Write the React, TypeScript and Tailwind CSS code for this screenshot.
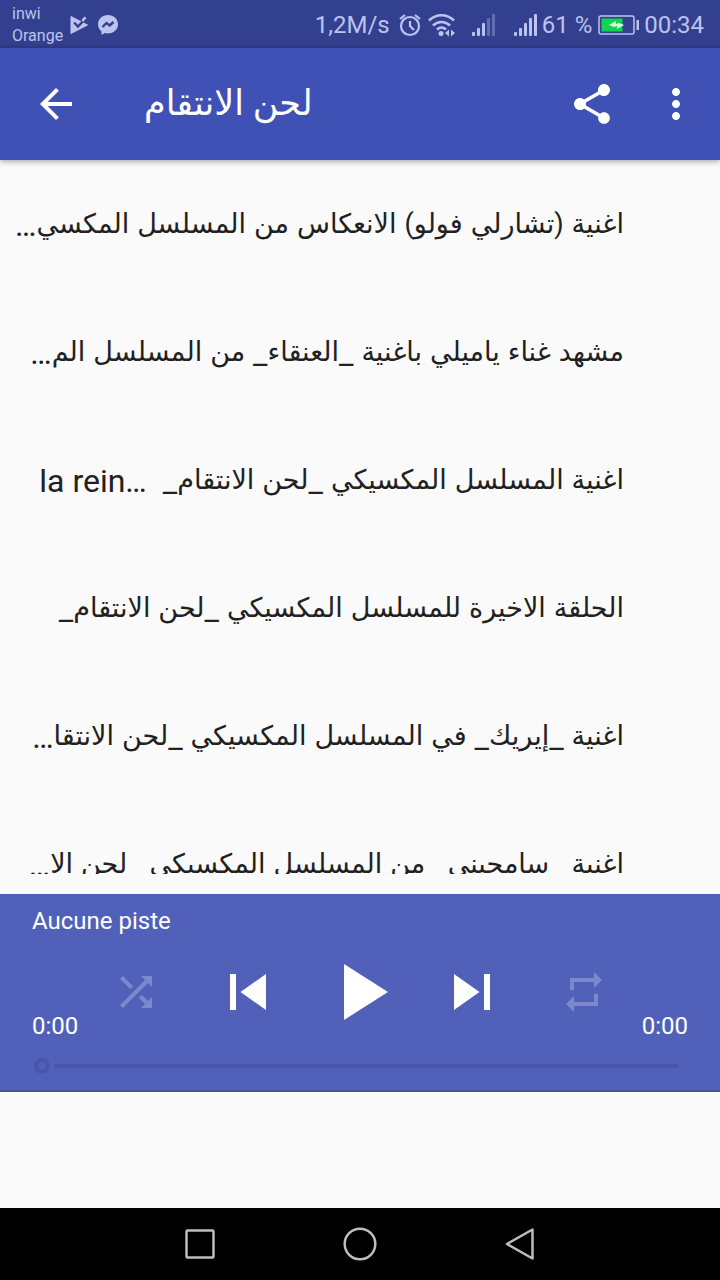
import React from "react";

type IconProps = { d: string; className: string };

function Icon({ d, className }: IconProps) {
  return (
    <svg viewBox="0 0 24 24" fill="currentColor" className={className} aria-hidden="true">
      <path d={d} />
    </svg>
  );
}

const paths = {
  back: "M20 11H7.83l5.59-5.59L12 4l-8 8 8 8 1.41-1.41L7.83 13H20v-2z",
  share:
    "M18 16.08c-.76 0-1.44.3-1.96.77L8.91 12.7c.05-.23.09-.46.09-.7s-.04-.47-.09-.7l7.05-4.11c.54.5 1.25.81 2.04.81 1.66 0 3-1.34 3-3s-1.34-3-3-3-3 1.34-3 3c0 .24.04.47.09.7L8.04 9.81C7.5 9.31 6.79 9 6 9c-1.66 0-3 1.34-3 3s1.34 3 3 3c.79 0 1.5-.31 2.04-.81l7.12 4.16c-.05.21-.08.43-.08.65 0 1.61 1.31 2.92 2.92 2.92s2.92-1.31 2.92-2.92-1.31-2.92-2.92-2.92z",
  more: "M12 8c1.1 0 2-.9 2-2s-.9-2-2-2-2 .9-2 2 .9 2 2 2zm0 2c-1.1 0-2 .9-2 2s.9 2 2 2 2-.9 2-2-.9-2-2-2zm0 6c-1.1 0-2 .9-2 2s.9 2 2 2 2-.9 2-2-.9-2-2-2z",
  shuffle:
    "M10.59 9.17L5.41 4 4 5.41l5.17 5.17 1.42-1.41zM14.5 4l2.04 2.04L4 18.59 5.41 20 17.96 7.46 20 9.5V4h-5.5zm.33 9.41l-1.41 1.41 3.13 3.13L14.5 20H20v-5.5l-2.04 2.04-3.13-3.13z",
  previous: "M6 6h2v12H6zm3.5 6l8.5 6V6z",
  play: "M8 5v14l11-7z",
  next: "M6 18l8.5-6L6 6v12zM16 6v12h2V6h-2z",
  repeat: "M7 7h10v3l4-4-4-4v3H5v6h2V7zm10 10H7v-3l-4 4 4 4v-3h12v-6h-2v4z",
};

const tracks: { title: string; latin?: string }[] = [
  { title: "اغنية (تشارلي فولو) الانعكاس من المسلسل المكسي…" },
  { title: "مشهد غناء ياميلي باغنية _العنقاء_ من المسلسل الم…" },
  { title: "اغنية المسلسل المكسيكي _لحن الانتقام_", latin: "la rein…" },
  { title: "الحلقة الاخيرة للمسلسل المكسيكي _لحن الانتقام_" },
  { title: "اغنية _إيريك_ في المسلسل المكسيكي _لحن الانتقا…" },
  { title: "اغنية _سامحيني_ من المسلسل المكسيكي _لحن الا…" },
];

// Arabic words are set smaller and slightly higher than the marks between them.
function MixedText({ text }: { text: string }) {
  return (
    <span>
      {text.split(/([()\u0600-\u06ff]+)/).map((part, i) =>
        i % 2 === 1 ? (
          <span key={i} className="align-[3px] text-[27px] leading-none">{part}</span>
        ) : (
          part
        ),
      )}
    </span>
  );
}

function Signal({ faded }: { faded: boolean }) {
  return (
    <svg viewBox="0 0 24 24" className="h-6 w-6" fill="currentColor" aria-hidden="true">
      <rect x="0" y="19" width="3" height="4" rx="1" />
      <rect x="5" y="15" width="3" height="8" rx="1" />
      <rect x="10" y="10" width="3" height="13" rx="1" />
      <rect x="15" y="5" width="3" height="18" rx="1" opacity={faded ? 0.35 : 1} />
      <rect x="20" y="1" width="3" height="22" rx="1" opacity={faded ? 0.35 : 1} />
    </svg>
  );
}

function StatusBar() {
  return (
    <div className="flex h-12 shrink-0 items-center bg-[#33408f] pt-0.5 pr-4 pl-3 text-[#bcc3ee]">
      <div className="text-base leading-[22px]">
        <div>inwi</div>
        <div>Orange</div>
      </div>
      <svg viewBox="0 0 20 20" className="ml-1.5 h-5 w-5" aria-hidden="true">
        <path d="M2 1.500 18.500 10 2 18.500Z" fill="currentColor" stroke="currentColor" strokeLinejoin="round" />
        <path d="m5 7.500 4 4L18 2" fill="none" stroke="#33408f" strokeWidth="2.400" />
        <path d="m12.500 5 3-3.500 2 1.500-3.500 4z" fill="currentColor" />
      </svg>
      <svg viewBox="0 0 22 22" className="ml-2 h-[22px] w-[22px]" aria-hidden="true">
        <path d="M11 1C5.300 1 1 5 1 10.300c0 2.900 1.300 5.400 3.500 7.100V21l3.300-1.900c1 .3 2 .4 3.200.4 5.700 0 10-4 10-9.200S16.700 1 11 1Z" fill="currentColor" />
        <path d="m5.500 13 4-4 3.200 2.500L16.500 8" fill="none" stroke="#33408f" strokeWidth="2.400" />
      </svg>
      <div className="ml-auto flex items-center text-2xl leading-8">
        <span>1,2M/s</span>
        <svg viewBox="0 0 24 24" className="ml-2 h-6 w-6" fill="none" stroke="currentColor" strokeWidth="2.200" aria-hidden="true">
          <circle cx="12" cy="13" r="9" />
          <path d="M12 8v5l4 4M2 6l5-4M22 6l-5-4" />
        </svg>
        <svg viewBox="0 0 28 24" className="ml-1.5 h-6 w-7" fill="none" stroke="currentColor" strokeWidth="2.500" aria-hidden="true">
          <path d="M1 7.500c7-7 18-7 25 0M5 12.500c5-4.800 12-4.800 17 0M9 16.500c3-2.600 6-2.600 9 0" />
          <circle cx="13" cy="20.500" r="2.500" fill="currentColor" stroke="none" />
          <path d="m17 20 4-3.500v7zM27 20l-4-3.500v7z" fill="currentColor" stroke="none" />
        </svg>
        <span className="ml-4 flex"><Signal faded /></span>
        <span className="ml-[18px] flex"><Signal faded={false} /></span>
        <span className="ml-1">61 %</span>
        <svg viewBox="0 0 42 20" className="ml-1.5 h-5 w-[42px]" aria-hidden="true">
          <rect x="1" y="1" width="35" height="18" rx="2" fill="none" stroke="currentColor" strokeWidth="1.500" />
          <rect x="3.500" y="3.500" width="21" height="13" fill="#10d552" />
          <path d="m11 10 7-4v3l3-1 5 2-7 4v-3l-3 1z" fill="#d9ffe0" />
          <rect x="38.500" y="5" width="2.500" height="10" fill="currentColor" />
        </svg>
        <span className="ml-1">00:34</span>
      </div>
    </div>
  );
}

function AppBar() {
  return (
    <header className="z-10 flex h-28 shrink-0 items-center bg-[#3f51b5] px-8 text-white shadow-[0_1px_6px_rgba(0,0,0,0.4)]">
      <button type="button" aria-label="Retour">
        <Icon d={paths.back} className="h-12 w-12" />
      </button>
      <h1 dir="rtl" className="ml-16 text-[35px] leading-12">لحن الانتقام</h1>
      <button type="button" aria-label="Partager" className="ml-auto">
        <Icon d={paths.share} className="h-12 w-12" />
      </button>
      <button type="button" aria-label="Plus d'options" className="-mr-3 ml-9">
        <Icon d={paths.more} className="h-12 w-12" />
      </button>
    </header>
  );
}

function Player() {
  return (
    <section className="shrink-0 border-b-2 border-[#4a559f] bg-[#5161ba] px-8 pt-3 text-2xl text-white">
      <p className="h-[30px] leading-[30px]">Aucune piste</p>
      <div className="flex h-28 items-center justify-between">
        <span className="w-12 self-end pb-2 leading-7">0:00</span>
        <div className="grid w-[560px] grid-cols-5 place-items-center">
          <button type="button" aria-label="Lecture aléatoire" className="text-white/25">
            <Icon d={paths.shuffle} className="h-12 w-12" />
          </button>
          <button type="button" aria-label="Précédent">
            <Icon d={paths.previous} className="h-[72px] w-[72px]" />
          </button>
          <button type="button" aria-label="Lire">
            <Icon d={paths.play} className="h-24 w-24" />
          </button>
          <button type="button" aria-label="Suivant">
            <Icon d={paths.next} className="h-[72px] w-[72px]" />
          </button>
          <button type="button" aria-label="Répéter" className="text-white/25">
            <Icon d={paths.repeat} className="h-12 w-12" />
          </button>
        </div>
        <span className="w-12 self-end pb-2 text-right leading-7">0:00</span>
      </div>
      <div className="flex h-[42px] items-center px-0.5 pb-1.5">
        <input
          type="range"
          min={0}
          max={100}
          defaultValue={0}
          disabled
          aria-label="Position"
          className="mr-2 h-4 w-full appearance-none bg-[linear-gradient(to_right,transparent_20px,#4957ab_20px)] bg-[length:100%_4px] bg-center bg-no-repeat [&::-webkit-slider-thumb]:h-4 [&::-webkit-slider-thumb]:w-4 [&::-webkit-slider-thumb]:appearance-none [&::-webkit-slider-thumb]:rounded-full [&::-webkit-slider-thumb]:border-4 [&::-webkit-slider-thumb]:border-solid [&::-webkit-slider-thumb]:border-[#4957ab]"
        />
      </div>
    </section>
  );
}

function NavBar() {
  return (
    <nav className="flex h-[72px] shrink-0 items-center justify-center gap-[124px] bg-black text-[#bdbdbd]">
      <button type="button" aria-label="Applications récentes">
        <svg viewBox="0 0 36 36" className="h-9 w-9" fill="none" stroke="currentColor" strokeWidth="2.500">
          <rect x="4.500" y="4.500" width="27" height="27" rx="1" />
        </svg>
      </button>
      <button type="button" aria-label="Accueil">
        <svg viewBox="0 0 36 36" className="h-9 w-9" fill="none" stroke="currentColor" strokeWidth="2.500">
          <circle cx="18" cy="18" r="15.300" />
        </svg>
      </button>
      <button type="button" aria-label="Précédent">
        <svg viewBox="0 0 36 36" className="h-9 w-9" fill="none" stroke="currentColor" strokeWidth="2.500" strokeLinejoin="round">
          <path d="M5 18 30.500 3.500v29z" />
        </svg>
      </button>
    </nav>
  );
}

export default function App() {
  return (
    <div className="flex h-screen flex-col bg-[#fafafa] font-[Roboto,'Noto_Sans','DejaVu_Sans',sans-serif] text-[#212121]">
      <StatusBar />
      <AppBar />
      <main className="mb-5 min-h-0 flex-1 overflow-hidden">
        <ul dir="rtl" className="pr-24 pl-8">
          {tracks.map((track) => (
            <li key={track.title} className="flex h-32 items-center pt-0.5 text-[32px] leading-10 whitespace-nowrap">
              <MixedText text={track.title} />
              {track.latin && (
                <bdi dir="ltr" className="mr-4">{track.latin}</bdi>
              )}
            </li>
          ))}
        </ul>
      </main>
      <Player />
      <div className="h-[116px] shrink-0" />
      <NavBar />
    </div>
  );
}
